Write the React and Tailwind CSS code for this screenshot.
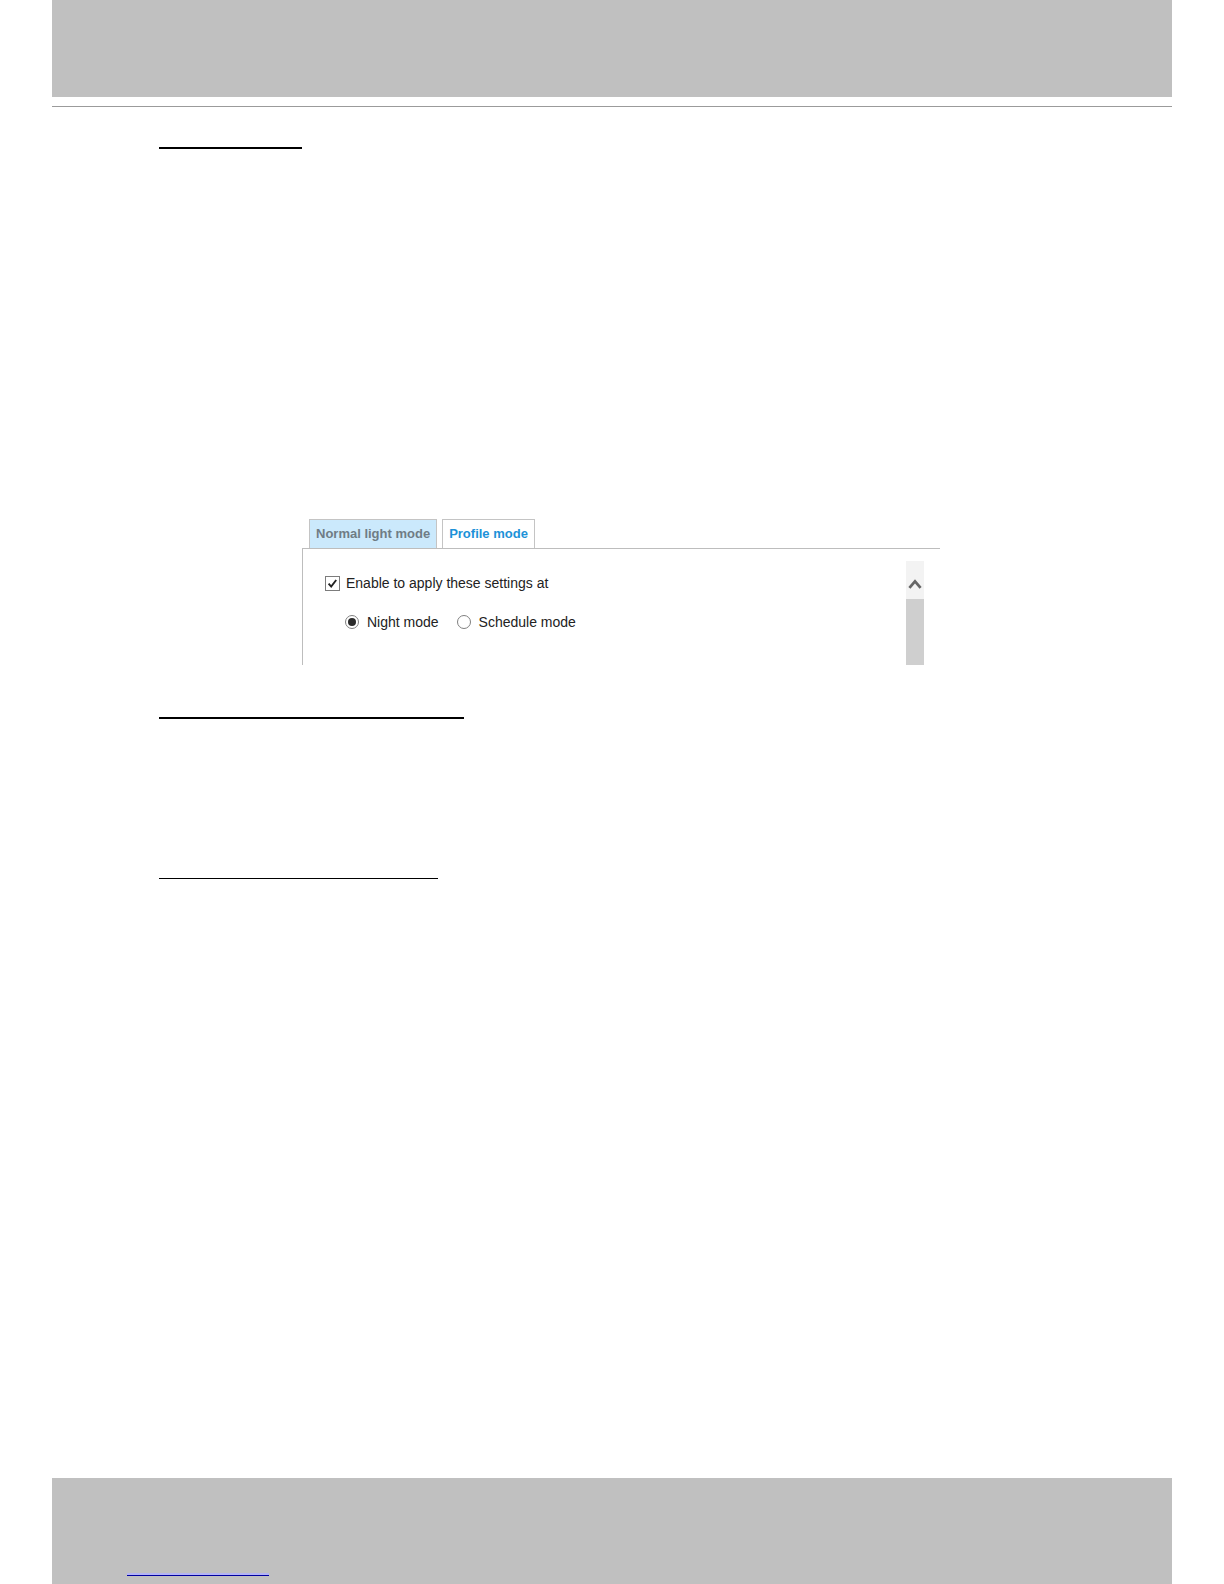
import React, { useState } from 'react';
import clsx from 'clsx';

const tabs = ['Normal light mode', 'Profile mode'];
const modes = ['Night mode', 'Schedule mode'];

const Tabs = ({ active, setActive }) => (
  <div role="tablist" className="flex gap-[5px] pl-[7px]">
    {tabs.map((tab) => (
      <button
        key={tab}
        type="button"
        role="tab"
        aria-selected={active === tab}
        onClick={() => setActive(tab)}
        className={clsx(
          'h-[29px] border border-b-0 border-[#c4c4c4] px-1.5 text-[13px] font-bold whitespace-nowrap',
          active === tab ? 'bg-[#cbe9fc] text-[#6f7c85]' : 'bg-white text-[#1c92d8]'
        )}
      >
        {tab}
      </button>
    ))}
  </div>
);

const Checkbox = ({ label, checked, onChange }) => (
  <label className="flex items-center gap-1.5">
    <span className="grid size-[15px]">
      <input
        type="checkbox"
        checked={checked}
        onChange={onChange}
        className="col-start-1 row-start-1 size-[15px] appearance-none border border-[#7c7c7c] bg-white"
      />
      {checked && (
        <svg
          viewBox="0 0 15 15"
          className="pointer-events-none col-start-1 row-start-1 size-[15px]"
          fill="none"
          stroke="#222"
          strokeWidth="1.9"
        >
          <path d="M3.6 7.6 6.2 10.6 11.2 4" />
        </svg>
      )}
    </span>
    {label}
  </label>
);

const Radio = ({ label, checked, onChange }) => (
  <label className="flex items-center gap-2">
    <span className="grid size-[14px] place-items-center">
      <input
        type="radio"
        name="mode"
        checked={checked}
        onChange={onChange}
        className="col-start-1 row-start-1 size-[14px] appearance-none rounded-full border border-[#808080] bg-white"
      />
      {checked && (
        <span className="pointer-events-none col-start-1 row-start-1 size-2 rounded-full bg-[#2a2a2a]" />
      )}
    </span>
    {label}
  </label>
);

const ScrollBar = () => (
  <div className="flex w-[18px] flex-col">
    <button
      type="button"
      aria-label="Scroll up"
      className="flex h-[38px] items-center justify-center bg-[#f3f3f3] pt-2"
    >
      <svg
        viewBox="0 0 14 10"
        className="h-[10px] w-[14px]"
        fill="none"
        stroke="#666"
        strokeWidth="2.8"
      >
        <path d="M1.4 8.8 7 2.4 12.6 8.8" />
      </svg>
    </button>
    <div className="flex-1 bg-[#cfcfcf]" />
  </div>
);

const LightModePanel = () => {
  const [active, setActive] = useState(tabs[0]);
  const [enabled, setEnabled] = useState(true);
  const [mode, setMode] = useState(modes[0]);

  return (
    <section className="ml-[143px] max-w-[638px]">
      <Tabs active={active} setActive={setActive} />
      <div className="flex justify-between border-t border-l border-[#bdbdbd] pr-4 pl-[22px] text-sm text-[#222]">
        <div className="flex flex-col gap-[19px] pt-6 pb-[33px]">
          <Checkbox
            label="Enable to apply these settings at"
            checked={enabled}
            onChange={() => setEnabled(!enabled)}
          />
          <div className="flex gap-[18px] pl-5">
            {modes.map((item) => (
              <Radio
                key={item}
                label={item}
                checked={mode === item}
                onChange={() => setMode(item)}
              />
            ))}
          </div>
        </div>
        <div className="flex pt-3">
          <ScrollBar />
        </div>
      </div>
    </section>
  );
};

const App = () => {
  return (
    <div className="flex min-h-screen flex-col bg-white px-[52px] font-['Liberation_Sans',Arial,sans-serif]">
      <header className="border-b border-[#9b9b9b] pb-[9px]">
        <div className="h-[97px] bg-[#c0c0c0]" />
      </header>

      <main className="px-[107px] pt-10">
        <hr className="w-[143px] border-t-2 border-black" />
        <div className="pt-[370px]">
          <LightModePanel />
        </div>
        <hr className="mt-[52px] w-[305px] border-t-2 border-black" />
        <hr className="mt-[159px] w-[279px] border-black" />
      </main>

      <footer className="mt-auto flex h-[106px] flex-col justify-end bg-[#c0c0c0] px-[75px] pb-2">
        <div className="h-[3px] w-[142px] border-b border-[#0000a0] bg-[#b4b4f4]" />
      </footer>
    </div>
  );
};

export default App;
